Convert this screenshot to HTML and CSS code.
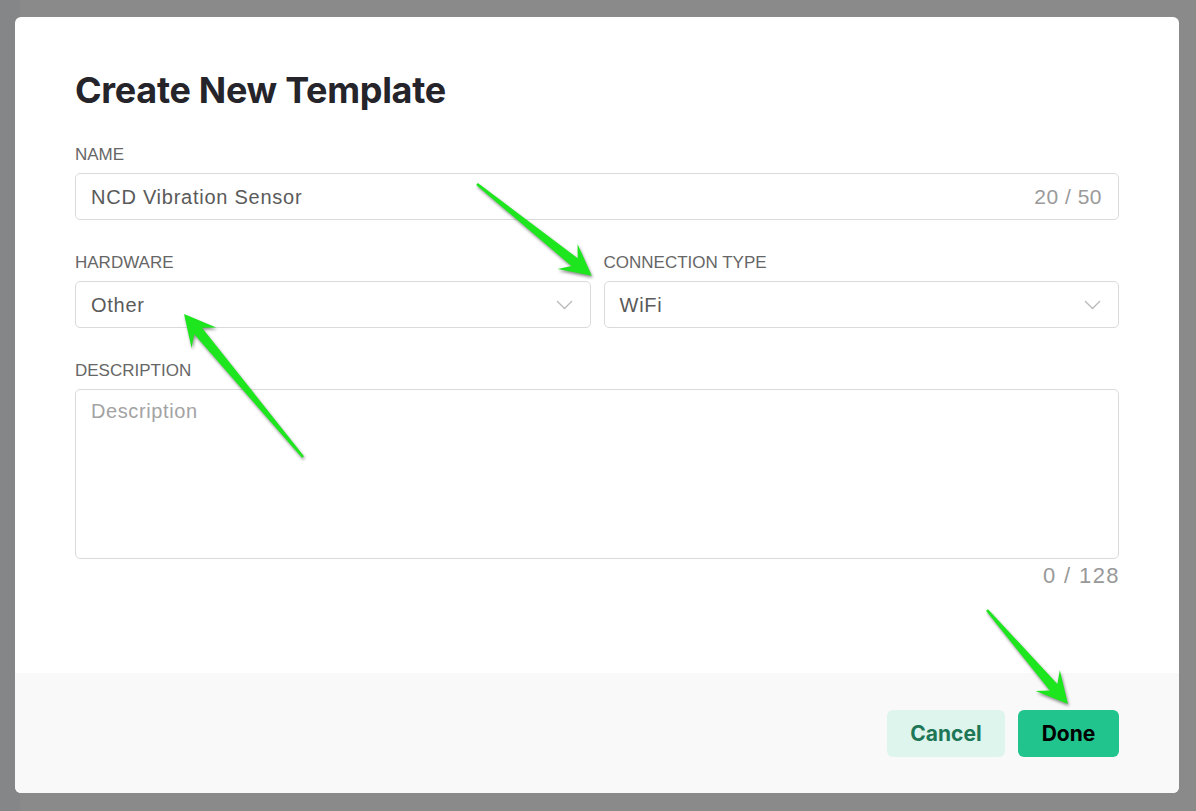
FILE: index.html
```html
<!DOCTYPE html>
<html lang="en">
<head>
<meta charset="utf-8">
<title>Create New Template</title>
<link rel="stylesheet" href="styles.css">
</head>
<body>
<div class="modal">
  <div class="modal-body">
    <h1 class="title">Create New Template</h1>
    <div class="field">
      <label class="label">NAME</label>
      <div class="control">
        <span class="value">NCD Vibration Sensor</span>
        <span class="count">20 / 50</span>
      </div>
    </div>
    <div class="row">
      <div class="field">
        <label class="label">HARDWARE</label>
        <div class="control">
          <span class="value">Other</span>
          <svg class="chev" width="17" height="10" viewBox="0 0 17 10"><polyline points="1,1 8.5,8.5 16,1" fill="none" stroke="#b9b9b9" stroke-width="1.3"/></svg>
        </div>
      </div>
      <div class="field">
        <label class="label">CONNECTION TYPE</label>
        <div class="control">
          <span class="value">WiFi</span>
          <svg class="chev" width="17" height="10" viewBox="0 0 17 10"><polyline points="1,1 8.5,8.5 16,1" fill="none" stroke="#b9b9b9" stroke-width="1.3"/></svg>
        </div>
      </div>
    </div>
    <div class="field last">
      <label class="label">DESCRIPTION</label>
      <div class="textarea"><span class="placeholder">Description</span></div>
      <div class="counter">0 / 128</div>
    </div>
  </div>
  <div class="modal-footer">
    <button class="btn btn-cancel">Cancel</button>
    <button class="btn btn-done">Done</button>
  </div>
</div>
<svg class="annotations" width="1196" height="811" viewBox="0 0 1196 811">
  <g transform="translate(477,184) rotate(38.66)">
    <polygon class="arrow" points="0,-1.3 125,-5 116,-16 147,0 116,16 125,5 0,1.3"/>
  </g>
  <g transform="translate(303,457) rotate(-129.76)">
    <polygon class="arrow" points="0,-1.3 164,-5 155,-16 186,0 155,16 164,5 0,1.3"/>
  </g>
  <g transform="translate(987,610) rotate(49.25)">
    <polygon class="arrow" points="0,-1.3 102,-5 93,-16 124,0 93,16 102,5 0,1.3"/>
  </g>
</svg>
</body>
</html>
```

FILE: styles.css
```css
html, body {
  margin: 0;
  padding: 0;
}
body {
  width: 1196px;
  height: 811px;
  box-sizing: border-box;
  padding: 17px 17px 18px 15px;
  background: linear-gradient(to right, #858687 20px, #8a8a8a 20px);
  font-family: "Liberation Sans", Arial, sans-serif;
  position: relative;
  overflow: hidden;
}
.modal {
  width: 1164px;
  height: 776px;
  background: #ffffff;
  border-radius: 6px;
  display: flex;
  flex-direction: column;
  overflow: hidden;
}
.modal-body {
  flex: 1;
  padding: 51px 60px 0 60px;
}
.title {
  margin: 0 0 33px 0;
  font-family: Inter, "Liberation Sans", sans-serif;
  font-weight: 700;
  font-size: 36px;
  line-height: 44px;
  color: #24242a;
  letter-spacing: -0.3px;
}
.field {
  display: flex;
  flex-direction: column;
  margin-bottom: 33px;
  flex: 1;
}
.field.last {
  margin-bottom: 0;
}
.row {
  display: flex;
  gap: 13px;
}
.label {
  font-size: 17px;
  line-height: 20px;
  color: #666666;
  margin-bottom: 8px;
}
.control {
  height: 47px;
  box-sizing: border-box;
  border: 1px solid #dadada;
  border-radius: 5px;
  display: flex;
  align-items: center;
  justify-content: space-between;
  padding: 0 16px 0 15px;
}
.value {
  font-size: 20px;
  color: #5a5a5a;
  letter-spacing: 0.75px;
  padding-top: 1px;
}
.count {
  font-size: 21px;
  color: #9a9a9a;
  letter-spacing: 0.5px;
  padding-top: 1px;
}
.chev {
  display: block;
  margin-right: 1px;
}
.textarea {
  height: 170px;
  box-sizing: border-box;
  border: 1px solid #dadada;
  border-radius: 5px;
  padding: 10px 15px;
}
.placeholder {
  font-size: 20px;
  color: #a3a3a3;
  letter-spacing: 0.6px;
}
.counter {
  align-self: flex-end;
  margin-top: 3px;
  font-size: 22px;
  line-height: 28px;
  color: #999999;
  letter-spacing: 1.4px;
  margin-right: -1px;
}
.modal-footer {
  height: 120px;
  box-sizing: border-box;
  background: #f9f9f9;
  display: flex;
  justify-content: flex-end;
  align-items: flex-start;
  gap: 13px;
  padding: 37px 60px 0 0;
}
.btn {
  height: 47px;
  border: none;
  border-radius: 6px;
  font-family: Inter, "Liberation Sans", sans-serif;
  font-weight: 700;
  font-size: 21px;
  padding: 0;
  cursor: pointer;
}
.btn-cancel {
  width: 118px;
  background: #ddf5ed;
  color: #1d7757;
}
.btn-done {
  width: 101px;
  background: #22c48d;
  color: #000000;
}
.annotations {
  position: absolute;
  left: 0;
  top: 0;
  pointer-events: none;
  filter: drop-shadow(1px 2px 1.5px rgba(0, 0, 0, 0.45));
}
.arrow {
  fill: #1ee61e;
}
```
